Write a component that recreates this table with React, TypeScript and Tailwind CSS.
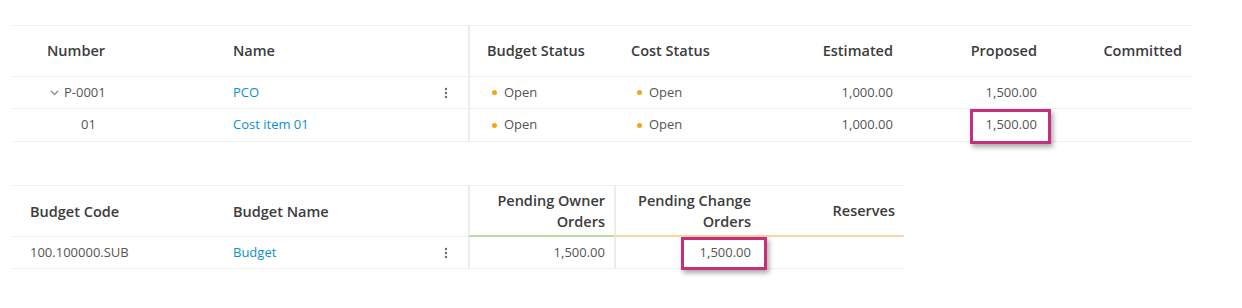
import type { ReactNode } from 'react';

const FONT = "font-['Open_Sans','Noto_Sans',sans-serif]";

function Kebab() {
  return (
    <svg width="4" height="12" viewBox="0 0 4 12" className="shrink-0">
      <circle cx="2" cy="2" r="1.2" fill="#6b6b6b" />
      <circle cx="2" cy="6" r="1.2" fill="#6b6b6b" />
      <circle cx="2" cy="10" r="1.2" fill="#6b6b6b" />
    </svg>
  );
}

function Chevron() {
  return (
    <svg width="9" height="6" viewBox="0 0 9 6" className="shrink-0">
      <polyline points="1,1 4.5,4.5 8,1" fill="none" stroke="#808080" strokeWidth="1.1" />
    </svg>
  );
}

function Status({ label }: { label: string }) {
  return (
    <span className="flex items-center gap-[7px]">
      <span className="h-[5px] w-[5px] rounded-full bg-[#f7a21b]" />
      {label}
    </span>
  );
}

function Highlight({ className }: { className: string }) {
  return (
    <div
      className={`pointer-events-none absolute border-[3px] border-[#c5307c] shadow-[2px_3px_5px_rgba(0,0,0,0.35)] ${className}`}
    />
  );
}

function Cell({ children, className = '' }: { children?: ReactNode; className?: string }) {
  return <div className={`relative flex items-center ${className}`}>{children}</div>;
}

const t1Cols = 'grid grid-cols-[206px_250px_148px_144px_143px_144px_145px]';
const t2Cols = 'grid grid-cols-[206px_250px_146px_146px_144px]';

export default function App() {
  return (
    <div className={`h-[308px] w-[1242px] bg-white ${FONT} text-[13px] text-[#555555]`}>
      {/* Change order table */}
      <div className="ml-[12px] pt-[25px] w-[1180px]">
        <div className={`${t1Cols} h-[52px] border-y border-[#efefef] text-[14.5px] font-semibold text-[#3c3c3c]`}>
          <Cell className="pl-[35px]">Number</Cell>
          <Cell className="pl-[15px]">Name</Cell>
          <Cell className="border-l-2 border-[#ececec] pl-[17px]">Budget Status</Cell>
          <Cell className="pl-[15px]">Cost Status</Cell>
          <Cell className="justify-end pr-[10px]">Estimated</Cell>
          <Cell className="justify-end pr-[10px]">Proposed</Cell>
          <Cell className="justify-end pr-[10px]">Committed</Cell>
        </div>
        <div className={`${t1Cols} h-[32px] border-b border-[#efefef]`}>
          <Cell className="gap-[5px] pl-[38px]">
            <Chevron />
            P-0001
          </Cell>
          <Cell className="justify-between pl-[15px] pr-[20px] text-[#0a8fd2]">
            PCO
            <Kebab />
          </Cell>
          <Cell className="border-l-2 border-[#ececec] pl-[22px]">
            <Status label="Open" />
          </Cell>
          <Cell className="pl-[21px]">
            <Status label="Open" />
          </Cell>
          <Cell className="justify-end pr-[10px]">1,000.00</Cell>
          <Cell className="justify-end pr-[10px]">1,500.00</Cell>
          <Cell />
        </div>
        <div className={`${t1Cols} h-[33px] border-b border-[#efefef]`}>
          <Cell className="pl-[69px]">01</Cell>
          <Cell className="pl-[15px] text-[#0a8fd2]">Cost item 01</Cell>
          <Cell className="border-l-2 border-[#ececec] pl-[22px]">
            <Status label="Open" />
          </Cell>
          <Cell className="pl-[21px]">
            <Status label="Open" />
          </Cell>
          <Cell className="justify-end pr-[10px]">1,000.00</Cell>
          <Cell className="justify-end pr-[10px]">
            1,500.00
            <Highlight className="left-[67px] top-0 h-[35px] w-[81px]" />
          </Cell>
          <Cell />
        </div>
      </div>

      {/* Budget table */}
      <div className="ml-[12px] mt-[43px] w-[892px]">
        <div className={`${t2Cols} h-[52px] border-t border-[#efefef] text-[14.5px] font-semibold leading-[21px] text-[#3c3c3c]`}>
          <Cell className="border-b border-[#efefef] pl-[18px]">Budget Code</Cell>
          <Cell className="border-b border-[#efefef] pl-[15px]">Budget Name</Cell>
          <Cell className="justify-end border-b-2 border-l-2 border-b-[#b9dc9f] border-l-[#ececec] pr-[9px] text-right">
            Pending Owner
            <br />
            Orders
          </Cell>
          <Cell className="justify-end border-b-2 border-l-2 border-b-[#fcd3a1] border-l-[#ececec] pr-[9px] text-right">
            Pending Change
            <br />
            Orders
          </Cell>
          <Cell className="justify-end border-b-2 border-b-[#fcd3a1] pr-[9px]">Reserves</Cell>
        </div>
        <div className={`${t2Cols} h-[32px] border-b border-[#efefef]`}>
          <Cell className="pl-[18px]">100.100000.SUB</Cell>
          <Cell className="justify-between pl-[15px] pr-[20px] text-[#0a8fd2]">
            Budget
            <Kebab />
          </Cell>
          <Cell className="justify-end border-l-2 border-[#ececec] pr-[9px]">1,500.00</Cell>
          <Cell className="justify-end border-l-2 border-[#ececec] pr-[9px]">
            1,500.00
            <Highlight className="left-[65px] top-0 h-[33px] w-[86px]" />
          </Cell>
          <Cell />
        </div>
      </div>
    </div>
  );
}
